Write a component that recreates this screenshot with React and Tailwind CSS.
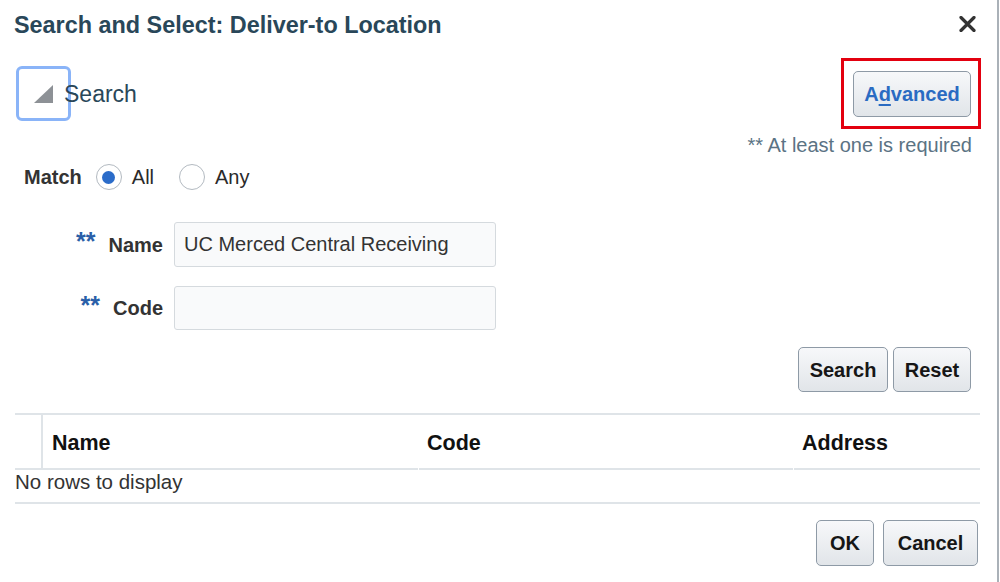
import { useState } from 'react'

function Btn({ children, className = '', color = 'text-[#161616]' }) {
  return (
    <div
      className={`h-full flex items-center justify-center border border-[#8e9aa6] rounded-[5px] bg-gradient-to-b from-[#f7f8fa] to-[#e1e5e9] text-[20px] font-bold cursor-pointer ${color} ${className}`}
    >
      {children}
    </div>
  )
}

function Radio({ checked, label, onClick }) {
  return (
    <div onClick={onClick} className="flex items-center cursor-pointer">
      <div className="w-[26px] h-[26px] rounded-full border-[1.5px] border-[#b3bac1] bg-white flex items-center justify-center">
        {checked && <div className="w-[13px] h-[13px] rounded-full bg-[#2b6cc9]" />}
      </div>
      <span className="ml-[10px] text-[20px] text-[#2a2a2a]">{label}</span>
    </div>
  )
}

function Field({ label, value, onChange }) {
  return (
    <div className="flex items-center h-full">
      <div className="w-[163px] flex items-center justify-end">
        <span className="text-[25px] leading-[25px] font-bold text-[#2a5fa8] pb-[6px]">**</span>
        <span className="ml-[13px] text-[20px] font-bold text-[#333]">{label}</span>
      </div>
      <input
        value={value}
        onChange={(e) => onChange(e.target.value)}
        className="ml-[11px] w-[322px] h-full border border-[#d5dade] bg-[#f9fafb] rounded-[3px] pl-[9px] text-[20px] text-[#333] outline-none"
      />
    </div>
  )
}

export default function App() {
  const [match, setMatch] = useState('all')
  const [name, setName] = useState('UC Merced Central Receiving')
  const [code, setCode] = useState('')

  return (
    <div className="w-[1000px] h-[582px] bg-white font-['Liberation_Sans',Arial,sans-serif] overflow-hidden">
      <div className="w-[999px] h-full border-r-2 border-[#aab1b8] flex flex-col">
        <div className="h-[48px] flex items-center justify-between pl-[14px] pr-[21px]">
          <h1 className="pt-[3px] text-[23.4px] font-bold text-[#294759]">Search and Select: Deliver-to Location</h1>
          <svg width="17" height="16" viewBox="0 0 17 16" className="cursor-pointer">
            <path d="M2 1.5 L15 14.5 M15 1.5 L2 14.5" stroke="#333" strokeWidth="3.2" strokeLinecap="round" />
          </svg>
        </div>

        <div className="mt-[10px] h-[71px] flex items-center justify-between pl-[16px] pr-[16px]">
          <div className="flex items-center">
            <div className="w-[55px] h-[55px] border-[3px] border-[#8ab4f8] rounded-[6px] flex items-center justify-center">
              <svg width="20" height="18" viewBox="0 0 20 18">
                <path d="M0 18 L19 18 L19 0 Z" fill="#8d9196" />
              </svg>
            </div>
            <span className="ml-[-7px] pt-[2px] text-[23px] text-[#294759]">Search</span>
          </div>
          <div className="border-[3px] border-[#e3000f] pl-[9px] pr-[7px] pt-[10px] pb-[9px]">
            <div className="w-[118px] h-[46px]">
              <Btn color="text-[#2a6bc2]">
                A<span className="underline underline-offset-[3px]">d</span>vanced
              </Btn>
            </div>
          </div>
        </div>

        <div className="mt-[4px] h-[24px] leading-[24px] text-right pr-[25px] text-[20px] text-[#5b7384]">
          ** At least one is required
        </div>

        <div className="h-[40px] flex items-center pl-[24px]">
          <span className="text-[20px] font-bold text-[#333] mr-[14px]">Match</span>
          <Radio checked={match === 'all'} label="All" onClick={() => setMatch('all')} />
          <div className="ml-[25px]">
            <Radio checked={match === 'any'} label="Any" onClick={() => setMatch('any')} />
          </div>
        </div>

        <div className="mt-[25px] h-[45px]">
          <Field label="Name" value={name} onChange={setName} />
        </div>
        <div className="mt-[19px] h-[44px]">
          <Field label="Code" value={code} onChange={setCode} />
        </div>

        <div className="mt-[17px] h-[45px] flex justify-end gap-[5px] pr-[26px]">
          <Btn className="w-[90px]">Search</Btn>
          <Btn className="w-[78px]">Reset</Btn>
        </div>

        <div className="mt-[21px] ml-[15px] w-[965px] border-t-2 border-[#dfe4e8]">
          <div className="flex h-[55px] text-[21.5px] font-bold text-[#111]">
            <div className="w-[28px] border-r-2 border-b-2 border-[#dfe4e8]" />
            <div className="w-[375px] border-b-2 border-[#dfe4e8] pl-[9px] pt-[3px] flex items-center">Name</div>
            <div className="ml-[1px] w-[374px] border-b-2 border-[#dfe4e8] pl-[8px] pt-[3px] flex items-center">Code</div>
            <div className="ml-[1px] flex-1 border-b-2 border-[#dfe4e8] pl-[8px] pt-[3px] flex items-center">Address</div>
          </div>
          <div className="h-[34px] pt-[2px] border-b-2 border-[#dfe4e8] text-[20.5px] leading-[20px] text-[#333]">
            No rows to display
          </div>
        </div>

        <div className="mt-[16px] h-[46px] flex justify-end gap-[9px] pr-[19px]">
          <Btn className="w-[58px]">OK</Btn>
          <Btn className="w-[95px]">Cancel</Btn>
        </div>
      </div>
    </div>
  )
}
